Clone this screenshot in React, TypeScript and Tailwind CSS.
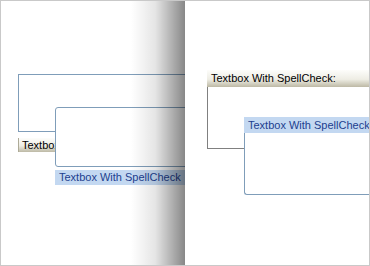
export default function App() {
  return (
    <div className="flex h-[266px] w-[370px] overflow-hidden border border-[#c9c9c9] bg-white font-['Liberation_Sans',Arial,sans-serif] text-[11px]">
      {/* left page, folding */}
      <div className="relative h-full w-[184px] shrink-0 overflow-hidden">
        <div className="ml-[17px] mt-[73px] h-[58px] w-[220px] border border-[#7f9db9]" />
        <div className="ml-[17px] mt-[6px] flex h-[14px] w-[220px] items-center whitespace-nowrap border-l border-[#aeab98] bg-[linear-gradient(#fdfdfb,#eeede4_55%,#bdb9a5)] pl-[3px] leading-none text-black">
          Textbox With SpellCheck:
        </div>
        <div className="absolute left-[54px] top-[106px] flex w-[220px] flex-col">
          <div className="h-[60px] rounded-[3px] border border-[#7f9db9] bg-white" />
          <div className="mt-[3px] flex h-[15px] items-center whitespace-nowrap bg-[#c3d8f1] pl-[4px] leading-none text-[#213f8f]">
            Textbox With SpellCheck
          </div>
        </div>
        <div className="pointer-events-none absolute inset-y-0 right-0 w-[54px] bg-[linear-gradient(90deg,rgba(0,0,0,0),rgba(0,0,0,0.1)_45%,rgba(0,0,0,0.47))]" />
      </div>

      {/* right page */}
      <div className="relative h-full flex-1 overflow-hidden">
        <div className="ml-[22px] mt-[69px] flex h-[17px] items-center whitespace-nowrap bg-[linear-gradient(#fdfdfb,#eeede4_55%,#bdb9a5)] pl-[4px] leading-none text-black">
          Textbox With SpellCheck:
        </div>
        <div className="ml-[22px] h-[62px] w-[240px] border-b border-l border-[#808080]" />
        <div className="absolute left-[59px] top-[116px] flex w-[200px] flex-col">
          <div className="flex h-[16px] items-center whitespace-nowrap bg-[#c3d8f1] pl-[4px] leading-none text-[#213f8f]">
            Textbox With SpellCheck
          </div>
          <div className="h-[62px] rounded-bl-[3px] border-b border-l border-[#7f9db9] bg-white" />
        </div>
      </div>
    </div>
  );
}
